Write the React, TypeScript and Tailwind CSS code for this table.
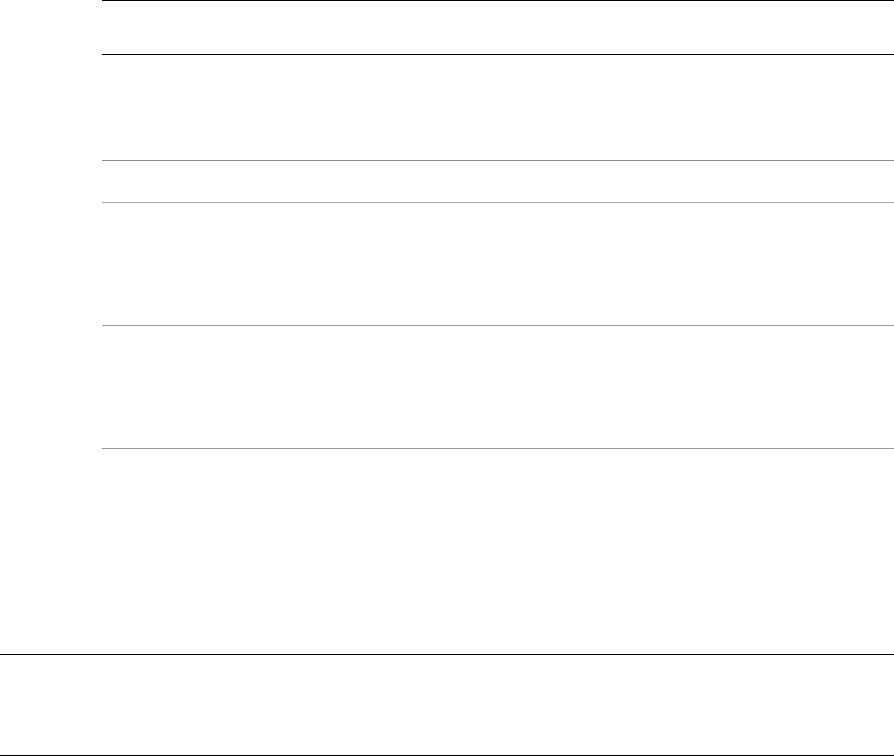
export default function App() {
  return (
    <div className="w-[894px] h-[756px] bg-white flex flex-col font-['Liberation_Sans',sans-serif]">
      <div className="pl-[102px] flex flex-col">
        <div className="h-[54px] border-t border-black" />
        <div className="h-[106px] border-t border-black" />
        <div className="h-[42px] border-t border-[#8c8c8c]" />
        <div className="h-[123px] border-t border-[#a8a8a8]" />
        <div className="h-[123px] border-t border-[#999999]" />
        <div className="h-[206px] border-t border-[#999999]" />
      </div>
      <div className="h-[101px] border-t border-black" />
      <div className="border-t border-black" />
    </div>
  );
}
